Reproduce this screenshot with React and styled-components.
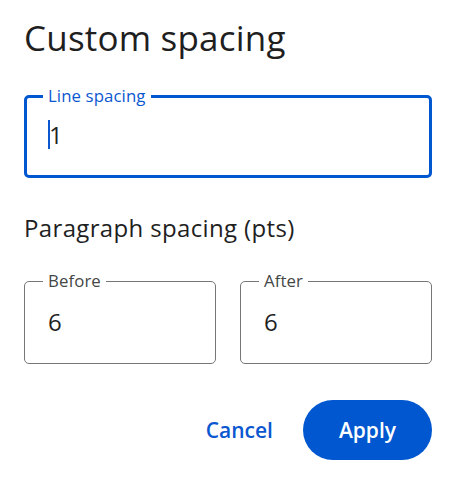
import styled, { createGlobalStyle } from "styled-components";

const GlobalStyle = createGlobalStyle`
  html, body {
    margin: 0;
    background: #fff;
  }
  body {
    font-family: "Open Sans", Roboto, "Noto Sans", sans-serif;
    color: #1f1f1f;
  }
`;

const Dialog = styled.div`
  width: 408px;
  padding: 16px 24px 0 24px;
  display: flex;
  flex-direction: column;
`;

const Title = styled.h1`
  margin: 0;
  font-size: 35px;
  line-height: 44px;
  font-weight: 400;
  letter-spacing: 0.2px;
`;

const Field = styled.fieldset`
  margin: ${p => p.$top || 0}px 0 0 0;
  min-width: 0;
  box-sizing: border-box;
  height: ${p => p.$height}px;
  padding: ${p => p.$pad}px ${p => 24 - p.$border}px 0;
  border: ${p => p.$border}px solid ${p => (p.$active ? "#0057cf" : "#747775")};
  border-radius: 5px;
`;

const Legend = styled.legend`
  margin-left: -5px;
  padding: 0 5px;
  font-size: 16.8px;
  line-height: 18px;
  letter-spacing: 0.1px;
  color: ${p => (p.$active ? "#0b57d0" : "#444746")};
`;

const Value = styled.div`
  display: flex;
  align-items: center;
  font-size: 24px;
  line-height: 28px;
  color: #1f1f1f;
`;

const Caret = styled.span`
  width: 2px;
  height: 29px;
  background: #0b57d0;
  margin-right: -1px;
`;

const Section = styled.h2`
  margin: 35px 0 0 0;
  font-size: 24px;
  line-height: 30px;
  font-weight: 400;
  letter-spacing: 0.35px;
`;

const Row = styled.div`
  display: grid;
  grid-template-columns: 1fr 1fr;
  gap: 24px;
  margin-top: 29px;
`;

const Actions = styled.div`
  display: flex;
  justify-content: flex-end;
  align-items: center;
  gap: 18px;
  margin-top: 36px;
`;

const Button = styled.button`
  border: none;
  cursor: pointer;
  font-family: "Open Sans", sans-serif;
  font-size: 21px;
  font-weight: 600;
  height: 60px;
  border-radius: 30px;
  padding: 0 ${p => (p.$filled ? 36 : 12)}px;
  background: ${p => (p.$filled ? "#0057cf" : "transparent")};
  color: ${p => (p.$filled ? "#fff" : "#0b57d0")};
`;

export default function App() {
  return (
    <>
      <GlobalStyle />
      <Dialog>
        <Title>Custom spacing</Title>
        <Field $active $border={3} $height={91} $pad={15} $top={27}>
          <Legend $active>Line spacing</Legend>
          <Value>
            <Caret />1
          </Value>
        </Field>
        <Section>Paragraph spacing (pts)</Section>
        <Row>
          <Field $border={1} $height={92} $pad={18}>
            <Legend>Before</Legend>
            <Value>6</Value>
          </Field>
          <Field $border={1} $height={92} $pad={18}>
            <Legend>After</Legend>
            <Value>6</Value>
          </Field>
        </Row>
        <Actions>
          <Button>Cancel</Button>
          <Button $filled>Apply</Button>
        </Actions>
      </Dialog>
    </>
  );
}
